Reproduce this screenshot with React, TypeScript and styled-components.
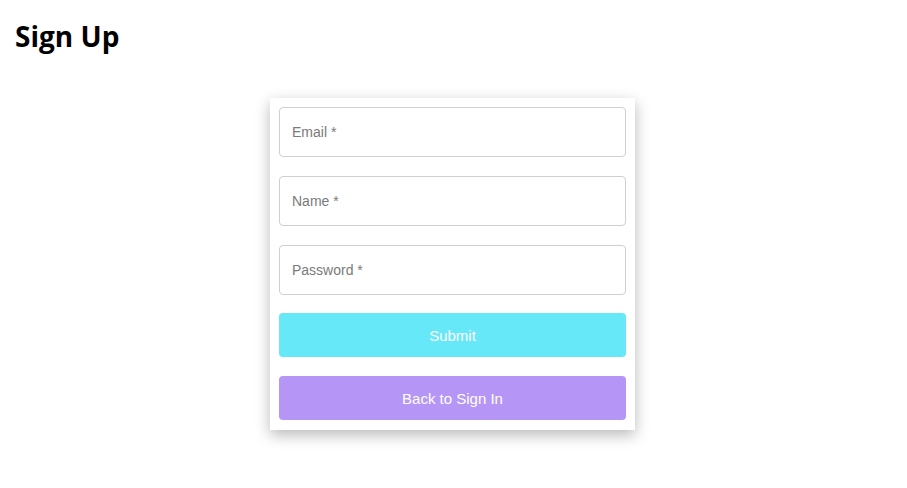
import React from "react";
import styled, { createGlobalStyle } from "styled-components";

const Global = createGlobalStyle`
  html, body { margin: 0; padding: 0; background: #fff; }
  body { font-family: "Liberation Sans", Arial, sans-serif; }
`;

const Page = styled.div`
  display: flex;
  flex-direction: column;
  padding: 17px 17px 40px 15px;
`;

const Title = styled.h1`
  margin: 0;
  font-family: "Open Sans", "Noto Sans", sans-serif;
  font-weight: 700;
  font-size: 28px;
  line-height: 38px;
  color: #000;
`;

const Card = styled.form`
  align-self: center;
  margin-top: 43px;
  width: 365px;
  box-sizing: border-box;
  padding: 9px 9px 10px;
  background: #fff;
  box-shadow: 0 5px 14px rgba(0, 0, 0, 0.28);
  display: flex;
  flex-direction: column;
  gap: 18.75px;
`;

const Input = styled.input`
  box-sizing: border-box;
  width: 100%;
  height: 50px;
  border: 1px solid #cfcfcf;
  border-radius: 4px;
  padding: 0 12px;
  font-family: "Liberation Sans", Arial, sans-serif;
  font-size: 14px;
  color: #333;
  outline: none;
  &::placeholder { color: #7a7a7a; }
`;

const Button = styled.button<{ $bg: string }>`
  box-sizing: border-box;
  width: 100%;
  height: 44px;
  border: none;
  border-radius: 4px;
  background: ${(p) => p.$bg};
  color: #fff;
  font-family: "Liberation Sans", Arial, sans-serif;
  font-size: 15px;
  padding: 0;
  cursor: pointer;
`;

export default function App() {
  return (
    <>
      <Global />
      <Page>
        <Title>Sign Up</Title>
        <Card onSubmit={(e) => e.preventDefault()}>
          <Input placeholder="Email *" />
          <Input placeholder="Name *" />
          <Input placeholder="Password *" type="password" />
          <Button $bg="#67e8f9" type="submit">Submit</Button>
          <Button $bg="#b596f7" type="button">Back to Sign In</Button>
        </Card>
      </Page>
    </>
  );
}
